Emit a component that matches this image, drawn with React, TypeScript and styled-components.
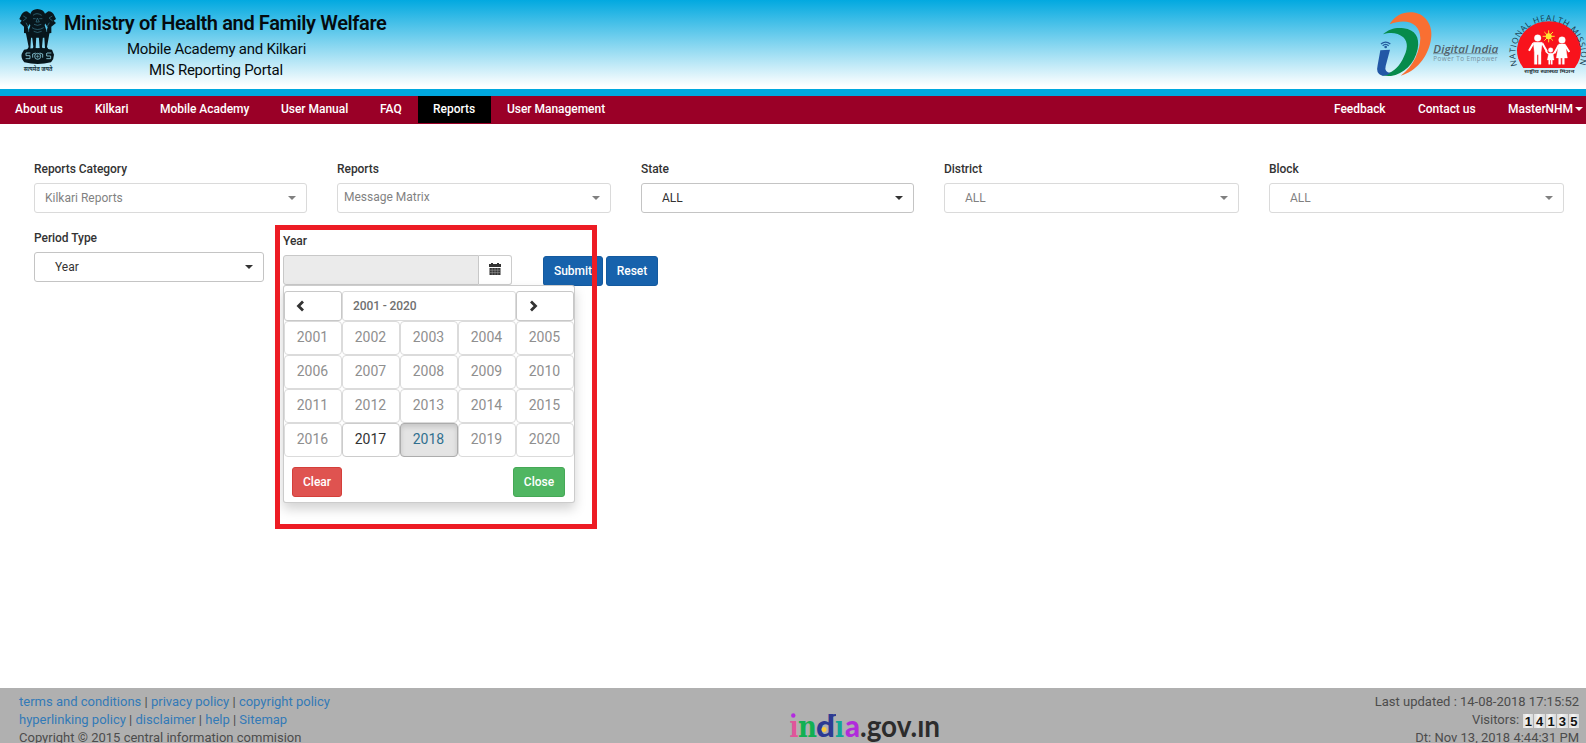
import React from "react";
import styled, { createGlobalStyle } from "styled-components";

const GlobalStyle = createGlobalStyle`
  *, *::before, *::after { box-sizing: border-box; }
  html, body { margin: 0; padding: 0; overflow: hidden; }
  body { font-family: Roboto, "Liberation Sans", sans-serif; font-size: 12px; color: #333; background: #fff; }
  button { font-family: inherit; }
`;

const Page = styled.div`
  display: flex;
  flex-direction: column;
  width: 1586px;
  height: 743px;
  overflow: hidden;
`;

const Header = styled.header`
  display: flex;
  justify-content: space-between;
  height: 96px;
  flex: none;
  border-bottom: 7px solid #00a8df;
  background: linear-gradient(#02a9e0 0%, #fff 97%);
`;

const Brand = styled.div`
  display: flex;
  padding: 8px 0 0 19px;
`;

const Titles = styled.div`
  display: flex;
  flex-direction: column;
  padding: 3px 0 0 7px;
  color: #050b0e;
  white-space: nowrap;
`;

const Title = styled.h1`
  margin: 0;
  font-size: 20px;
  line-height: 24px;
  font-weight: 600;
  letter-spacing: -0.38px;
`;

const Subtitle = styled.div<{ $left: number; $gap?: number }>`
  margin: ${(p) => p.$gap ?? 0}px 0 0 ${(p) => p.$left}px;
  font-size: 15px;
  line-height: 20px;
  letter-spacing: -0.23px;
`;

const Logos = styled.div`
  display: flex;
`;

const Nav = styled.nav`
  display: flex;
  justify-content: space-between;
  flex: none;
  height: 28px;
  background: #9a0027;
`;

const NavGroup = styled.div`
  display: flex;
`;

const NavItem = styled.a<{ $active?: boolean; $w: number; $pad?: number }>`
  display: flex;
  align-items: center;
  gap: 2px;
  width: ${(p) => p.$w}px;
  height: 27px;
  padding: 0 0 2px ${(p) => p.$pad ?? 15}px;
  color: #fff;
  background: ${(p) => (p.$active ? "#000" : "transparent")};
  font-weight: 500;
  letter-spacing: -0.03px;
  white-space: nowrap;
`;

const Caret = styled.i`
  flex: none;
  border: 4px solid transparent;
  border-top-color: currentColor;
  border-bottom: 0;
`;

const Main = styled.main`
  flex: 1;
  padding: 37px 0 0 34px;
`;

const FilterRow = styled.div`
  display: flex;
  gap: 30px;
`;

const SecondRow = styled.div`
  display: flex;
  align-items: flex-start;
  margin-top: 17px;
`;

const Field = styled.div<{ $w: number }>`
  width: ${(p) => p.$w}px;
  flex: none;
`;

const Label = styled.label`
  display: block;
  height: 22px;
  line-height: 16px;
  font-weight: 500;
  letter-spacing: -0.05px;
  color: #333;
`;

const Select = styled.div<{ $disabled?: boolean; $pad: number; $lift?: number }>`
  display: flex;
  align-items: center;
  justify-content: space-between;
  height: 30px;
  padding: 0 10px 0 ${(p) => p.$pad}px;
  border: 1px solid #c4c4c4;
  border-radius: 3px;
  color: #333;
  opacity: ${(p) => (p.$disabled ? 0.62 : 1)};

  span {
    padding-bottom: ${(p) => p.$lift ?? 0}px;
  }
`;

const YearBlock = styled.div`
  position: relative;
  width: 229px;
  margin: 3px 0 0 19px;
`;

const InputGroup = styled.div`
  display: flex;
  height: 30px;
`;

const YearInput = styled.div`
  width: 196px;
  border: 1px solid #c8c8c8;
  border-radius: 3px 0 0 3px;
  background: #ebebeb;
`;

const CalendarButton = styled.button`
  display: flex;
  align-items: center;
  justify-content: center;
  width: 33px;
  padding: 0 1px 2px 0;
  border: 1px solid #ccc;
  border-left: 0;
  border-radius: 0 3px 3px 0;
  background: #fff;
  color: #333;
`;

const Popup = styled.div`
  position: absolute;
  z-index: 2;
  top: 52px;
  left: 0;
  width: 292px;
  height: 218px;
  padding: 5px 0 0 1px;
  border: 1px solid rgba(0, 0, 0, 0.2);
  border-radius: 3px;
  background: #fff;
  box-shadow: 0 6px 12px rgba(0, 0, 0, 0.175);
`;

const PopupHead = styled.div`
  display: grid;
  grid-template-columns: 58px 174px 58px;
  width: 290px;
  margin-left: -1px;
`;

const HeadCell = styled.div<{ $muted?: boolean }>`
  display: flex;
  align-items: center;
  height: 30px;
  padding: 0 10px 1px;
  border: 1px solid ${(p) => (p.$muted ? "#dbdbdb" : "#c8c8c8")};
  border-radius: 3px;
  color: ${(p) => (p.$muted ? "#707070" : "#333")};
  font-weight: 500;
  letter-spacing: -0.1px;
`;

const YearGrid = styled.div`
  display: grid;
  grid-template-columns: repeat(5, 58px);
  grid-auto-rows: 34px;
  width: 290px;
  margin-left: -1px;
`;

const YearCell = styled.div<{ $state?: string }>`
  display: flex;
  align-items: center;
  justify-content: center;
  padding: 0 1px 2px 0;
  border: 1px solid ${(p) => (p.$state === "active" ? "#acacac" : p.$state ? "#ccc" : "#dbdbdb")};
  border-radius: 4px;
  background: ${(p) => (p.$state === "active" ? "#e4e4e4" : "#fff")};
  box-shadow: ${(p) => (p.$state === "active" ? "inset 0 3px 5px rgba(0,0,0,.125)" : "none")};
  color: ${(p) => (p.$state === "active" ? "#31708f" : p.$state ? "#333" : "#8f8f8f")};
  font-size: 14px;
`;

const PopupFoot = styled.div`
  display: flex;
  justify-content: space-between;
  padding: 10px 9px 0 7px;
`;

const Button = styled.button<{ $bg: string; $line: string; $w: number }>`
  width: ${(p) => p.$w}px;
  height: 30px;
  padding: 0 0 1px;
  border: 1px solid ${(p) => p.$line};
  border-radius: 3px;
  background: ${(p) => p.$bg};
  color: #fff;
  font-size: 12px;
  font-weight: 500;
`;

const Actions = styled.div`
  display: flex;
  gap: 3px;
  margin: 26px 0 0 31px;
`;

const Highlight = styled.div`
  position: absolute;
  z-index: 3;
  top: -8px;
  left: -8px;
  width: 322px;
  height: 304px;
  border: 5px solid #ed1c24;
  pointer-events: none;
`;

const Footer = styled.footer`
  display: grid;
  grid-template-columns: 1fr auto 1fr;
  flex: none;
  height: 55px;
  padding: 5px 7px 0 19px;
  overflow: hidden;
  background: #b0b0b0;
  color: #4c4c4c;
  font-size: 13px;
  line-height: 18px;
  white-space: nowrap;
`;

const FootLink = styled.a`
  color: #337ab7;
`;

const GovSlot = styled.div`
  padding: 20px 0 0 132px;
`;

const FootInfo = styled.div`
  display: flex;
  flex-direction: column;
  align-items: flex-end;
`;

const Visitors = styled.div`
  display: flex;
  align-items: center;
  gap: 4px;
  height: 18px;
`;

const Counter = styled.span`
  display: flex;
  gap: 1px;
  margin-top: 2px;
`;

const Digit = styled.span`
  width: 10.4px;
  height: 14px;
  background: linear-gradient(90deg, #ddd, #f6f6f6 40%, #d8d8d8);
  color: #111;
  font: bold 13px/15px "Liberation Sans", Arial, sans-serif;
  text-align: center;
`;

const Emblem = () => (
  <svg width="38" height="66" viewBox="57 24 114 198">
    <g fill="#08161c">
      <path d="M92 40Q96 28 112 27Q130 28 135 41L139 56L134 76L142 100L134 113H93L82 101L91 77L86 58Z" />
      <path d="M62 49Q68 34 81 34L92 42L94 65L83 82L89 101L72 99L72 80L60 69L65 62L58 57Z" />
      <path d="M164 49Q158 34 145 34L134 42L132 65L143 82L137 101L154 99L154 80L168 69L161 62L168 57Z" />
      <path d="M77 96L94 98L91 146H99V151H80L86 141Z M96 108L109 105L107 145H113V151H96L100 141Z M116 105L129 108L126 141L131 151H114V145H119Z M132 98L149 96L141 141L147 151H128V145H135Z" />
      <path d="M72 149Q113 141 156 149L162 164Q162 177 153 187Q113 197 73 187Q62 175 65 162Z" />
    </g>
    <g fill="none" stroke="#4592a8" strokeWidth="1.6">
      <path d="M99 46Q110 36 125 46M99 56H107M118 56H127M112 54L108 66H118ZM102 73Q112 79 124 73M96 83Q112 94 131 83M101 94Q112 101 125 94M70 48L80 54L69 63M157 48L147 54L158 63M78 68L84 80M148 68L141 80M86 87V96M140 87V96" />
      <path d="M91 159H78V167H90V176H77M141 159H154M140 159V168H152V176H139M98 173V162L107 159M128 173V162L119 159" stroke="#8ecfdf" strokeWidth="2.5" />
      <circle cx="113" cy="169" r="9" stroke="#8ecfdf" strokeWidth="2.5" />
      <path d="M107 169H119M113 163V175" stroke="#8ecfdf" />
    </g>
    <text x="114" y="214" textAnchor="middle" fontSize="17" fontWeight="700" textLength="86" lengthAdjust="spacingAndGlyphs" fill="#16343e" fontFamily="Noto Sans, sans-serif">सत्यमेव जयते</text>
  </svg>
);

const DigitalIndia = () => (
  <svg width="130" height="80" viewBox="98 0 390 240">
    <path fill="#f96f32" d="M148 73C165 44 190 35 217 37C260 42 281 82 271 124C261 172 228 214 181 227C221 199 239 151 240 115C240 69 198 53 148 73Z" />
    <path fill="#068b4b" d="M128 103C147 86 168 82 190 85C224 89 239 112 232 147C222 193 190 222 152 228Q130 230 116 221C151 225 170 208 186 180C203 148 204 128 189 112C173 97 148 96 128 103Z" />
    <path fill="#2257a6" d="M120 151L149 149L136 198Q131 216 151 219Q140 228 126 227Q105 223 112 195Z" />
    <g fill="none" stroke="#235b9d" strokeWidth="4">
      <path d="M122 132Q136 121 150 132M127 137Q136 129 145 137" />
      <circle cx="136" cy="141" r="2" fill="#235b9d" />
    </g>
    <text x="279" y="159" fontFamily="Open Sans, sans-serif" fontSize="34" fontStyle="italic" fontWeight="600" textLength="195" lengthAdjust="spacingAndGlyphs" fill="#51616a">Digital India</text>
    <path d="M278 161H473" stroke="#61747d" strokeWidth="2" />
    <text x="279" y="183" fontFamily="Open Sans, sans-serif" fontSize="19" textLength="192" fill="#78909c">Power To Empower</text>
  </svg>
);

const HealthMission = () => (
  <svg width="83" height="80" viewBox="489 0 249 240">
    <defs>
      <path id="missionArc" d="M531 197A98 102 0 1 1 717 197" />
    </defs>
    <path fill="#f8131c" d="M550 204A96 88 0 1 1 704 204Z" />
    <text fontFamily="Open Sans, sans-serif" fontSize="25" fill="#163b4e">
      <textPath href="#missionArc" textLength="376">NATIONAL HEALTH MISSION</textPath>
    </text>
    <path stroke="#ffe12e" strokeWidth="3" d="M626 91V127M608 109H644M613 96L639 122M639 96L613 122" />
    <circle cx="626" cy="109" r="9" fill="#ffe633" />
    <g fill="#fff" stroke="#fff" strokeLinejoin="round">
      <circle cx="593" cy="114" r="10" />
      <circle cx="666" cy="120" r="10" />
      <circle cx="632" cy="150" r="7" />
      <path d="M580 127H607L603 158V193H595V164H591V193H583V157Z" />
      <path d="M580 130L567 152M607 130L621 155M656 136L643 160M675 136L688 156" strokeWidth="6" fill="none" />
      <path d="M656 132H676L682 174H673V193H667V174H662V193H656V174H649Z" />
      <path d="M626 160H639L642 180H637V193H633V180H630V193H626V180H622Z" />
      <path d="M626 162L617 154M639 162L647 154" strokeWidth="4" fill="none" />
    </g>
    <text x="628" y="219" textAnchor="middle" fontSize="15" fontWeight="700" textLength="150" lengthAdjust="spacingAndGlyphs" fill="#33434a" fontFamily="Noto Sans, sans-serif">राष्ट्रीय स्वास्थ्य मिशन</text>
  </svg>
);

const CalendarIcon = () => (
  <svg width="12" height="13" viewBox="0 0 12 13">
    <path fill="#333" d="M0 1H2V0H4V1H8V0H10V1H12V4H0ZM0.5 5H11.5V12H0.5Z" />
    <path stroke="#aaa" strokeWidth=".5" d="M1 7.2H11M1 9.6H11M3.2 5V12M6 5V12M8.8 5V12" />
  </svg>
);

const Chevron = ({ right }: { right?: boolean }) => (
  <svg width="12" height="12" viewBox="0 0 12 12">
    <path fill="none" stroke="#333" strokeWidth="2.8" d={right ? "M4 1.5L8.5 6L4 10.5" : "M8 1.5L3.5 6L8 10.5"} />
  </svg>
);

const IndiaGov = () => (
  <svg width="152" height="37" viewBox="0 0 152 37" fontFamily="Lato, sans-serif" fontSize="30">
    <g fontWeight="900">
      <circle cx="4.3" cy="2.5" r="2.2" fill="#b32be0" />
      <g fontFamily="DejaVu Serif, serif" fontWeight="700" fontSize="29">
        <text x="0.5" y="24" textLength="9" lengthAdjust="spacingAndGlyphs" fill="#e0559a">ı</text>
        <text x="9" y="24" textLength="19" lengthAdjust="spacingAndGlyphs" fill="#12b052">n</text>
        <text x="46" y="24" textLength="9" lengthAdjust="spacingAndGlyphs" fill="#10a895">ı</text>
      </g>
      <text x="27" y="24" textLength="19" lengthAdjust="spacingAndGlyphs" fill="#2d3a92">d</text>
      <circle cx="35" cy="16.5" r="2.5" fill="#ffcb3a" />
      <path fill="none" stroke="#2d3a92" strokeWidth="2" d="M42 6Q42 2 47 2" />
      <text x="56" y="24" textLength="15" lengthAdjust="spacingAndGlyphs" fill="#b12bdb">a</text>
    </g>
    <text x="71" y="24" textLength="80" lengthAdjust="spacingAndGlyphs" fontWeight="700" fill="#2c2c2c">.gov.ın</text>
  </svg>
);

const topFilters = [
  { label: "Reports Category", value: "Kilkari Reports", w: 273, pad: 10, disabled: true },
  { label: "Reports", value: "Message Matrix", w: 274, pad: 6, disabled: true, lift: 2 },
  { label: "State", value: "ALL", w: 273, pad: 20 },
  { label: "District", value: "ALL", w: 295, pad: 20, disabled: true },
  { label: "Block", value: "ALL", w: 295, pad: 20, disabled: true },
];

const years = Array.from({ length: 20 }, (_, i) => 2001 + i);
const yearState = (y: number) => (y === 2018 ? "active" : y === 2017 ? "enabled" : undefined);

export default function App() {
  return (
    <Page>
      <GlobalStyle />
      <Header>
        <Brand>
          <Emblem />
          <Titles>
            <Title>Ministry of Health and Family Welfare</Title>
            <Subtitle $left={63} $gap={4}>Mobile Academy and Kilkari</Subtitle>
            <Subtitle $left={85} $gap={1}>MIS Reporting Portal</Subtitle>
          </Titles>
        </Brand>
        <Logos>
          <DigitalIndia />
          <HealthMission />
        </Logos>
      </Header>
      <Nav>
        <NavGroup>
          <NavItem $w={80}>About us</NavItem>
          <NavItem $w={65}>Kilkari</NavItem>
          <NavItem $w={121}>Mobile Academy</NavItem>
          <NavItem $w={99}>User Manual</NavItem>
          <NavItem $w={53}>FAQ</NavItem>
          <NavItem $w={73} $active>Reports</NavItem>
          <NavItem $w={130} $pad={16}>User Management</NavItem>
        </NavGroup>
        <NavGroup>
          <NavItem $w={84}>Feedback</NavItem>
          <NavItem $w={90}>Contact us</NavItem>
          <NavItem $w={93}>
            MasterNHM <Caret />
          </NavItem>
        </NavGroup>
      </Nav>
      <Main>
        <FilterRow>
          {topFilters.map((f) => (
            <Field key={f.label} $w={f.w}>
              <Label>{f.label}</Label>
              <Select $pad={f.pad} $disabled={f.disabled} $lift={f.lift}>
                <span>{f.value}</span>
                <Caret />
              </Select>
            </Field>
          ))}
        </FilterRow>
        <SecondRow>
          <Field $w={230}>
            <Label>Period Type</Label>
            <Select $pad={20}>
              <span>Year</span>
              <Caret />
            </Select>
          </Field>
          <YearBlock>
            <Label>Year</Label>
            <InputGroup>
              <YearInput />
              <CalendarButton>
                <CalendarIcon />
              </CalendarButton>
            </InputGroup>
            <Popup>
              <PopupHead>
                <HeadCell><Chevron /></HeadCell>
                <HeadCell $muted>2001 - 2020</HeadCell>
                <HeadCell><Chevron right /></HeadCell>
              </PopupHead>
              <YearGrid>
                {years.map((y) => (
                  <YearCell key={y} $state={yearState(y)}>{y}</YearCell>
                ))}
              </YearGrid>
              <PopupFoot>
                <Button $w={50} $bg="#df5350" $line="#d43f3a">Clear</Button>
                <Button $w={52} $bg="#50b662" $line="#45a856">Close</Button>
              </PopupFoot>
            </Popup>
            <Highlight />
          </YearBlock>
          <Actions>
            <Button $w={60} $bg="#1762ac" $line="#145a9f">Submit</Button>
            <Button $w={52} $bg="#1762ac" $line="#145a9f">Reset</Button>
          </Actions>
        </SecondRow>
      </Main>
      <Footer>
        <div>
          <div>
            <FootLink>terms and conditions</FootLink> | <FootLink>privacy policy</FootLink> | <FootLink>copyright policy</FootLink>
          </div>
          <div>
            <FootLink>hyperlinking policy</FootLink> | <FootLink>disclaimer</FootLink> | <FootLink>help</FootLink> | <FootLink>Sitemap</FootLink>
          </div>
          <div>Copyright © 2015 central information commision</div>
        </div>
        <GovSlot>
          <IndiaGov />
        </GovSlot>
        <FootInfo>
          <div>Last updated : 14-08-2018 17:15:52</div>
          <Visitors>
            Visitors:
            <Counter>
              {"14135".split("").map((d, i) => (
                <Digit key={i}>{d}</Digit>
              ))}
            </Counter>
          </Visitors>
          <div>Dt: Nov 13, 2018 4:44:31 PM</div>
        </FootInfo>
      </Footer>
    </Page>
  );
}
